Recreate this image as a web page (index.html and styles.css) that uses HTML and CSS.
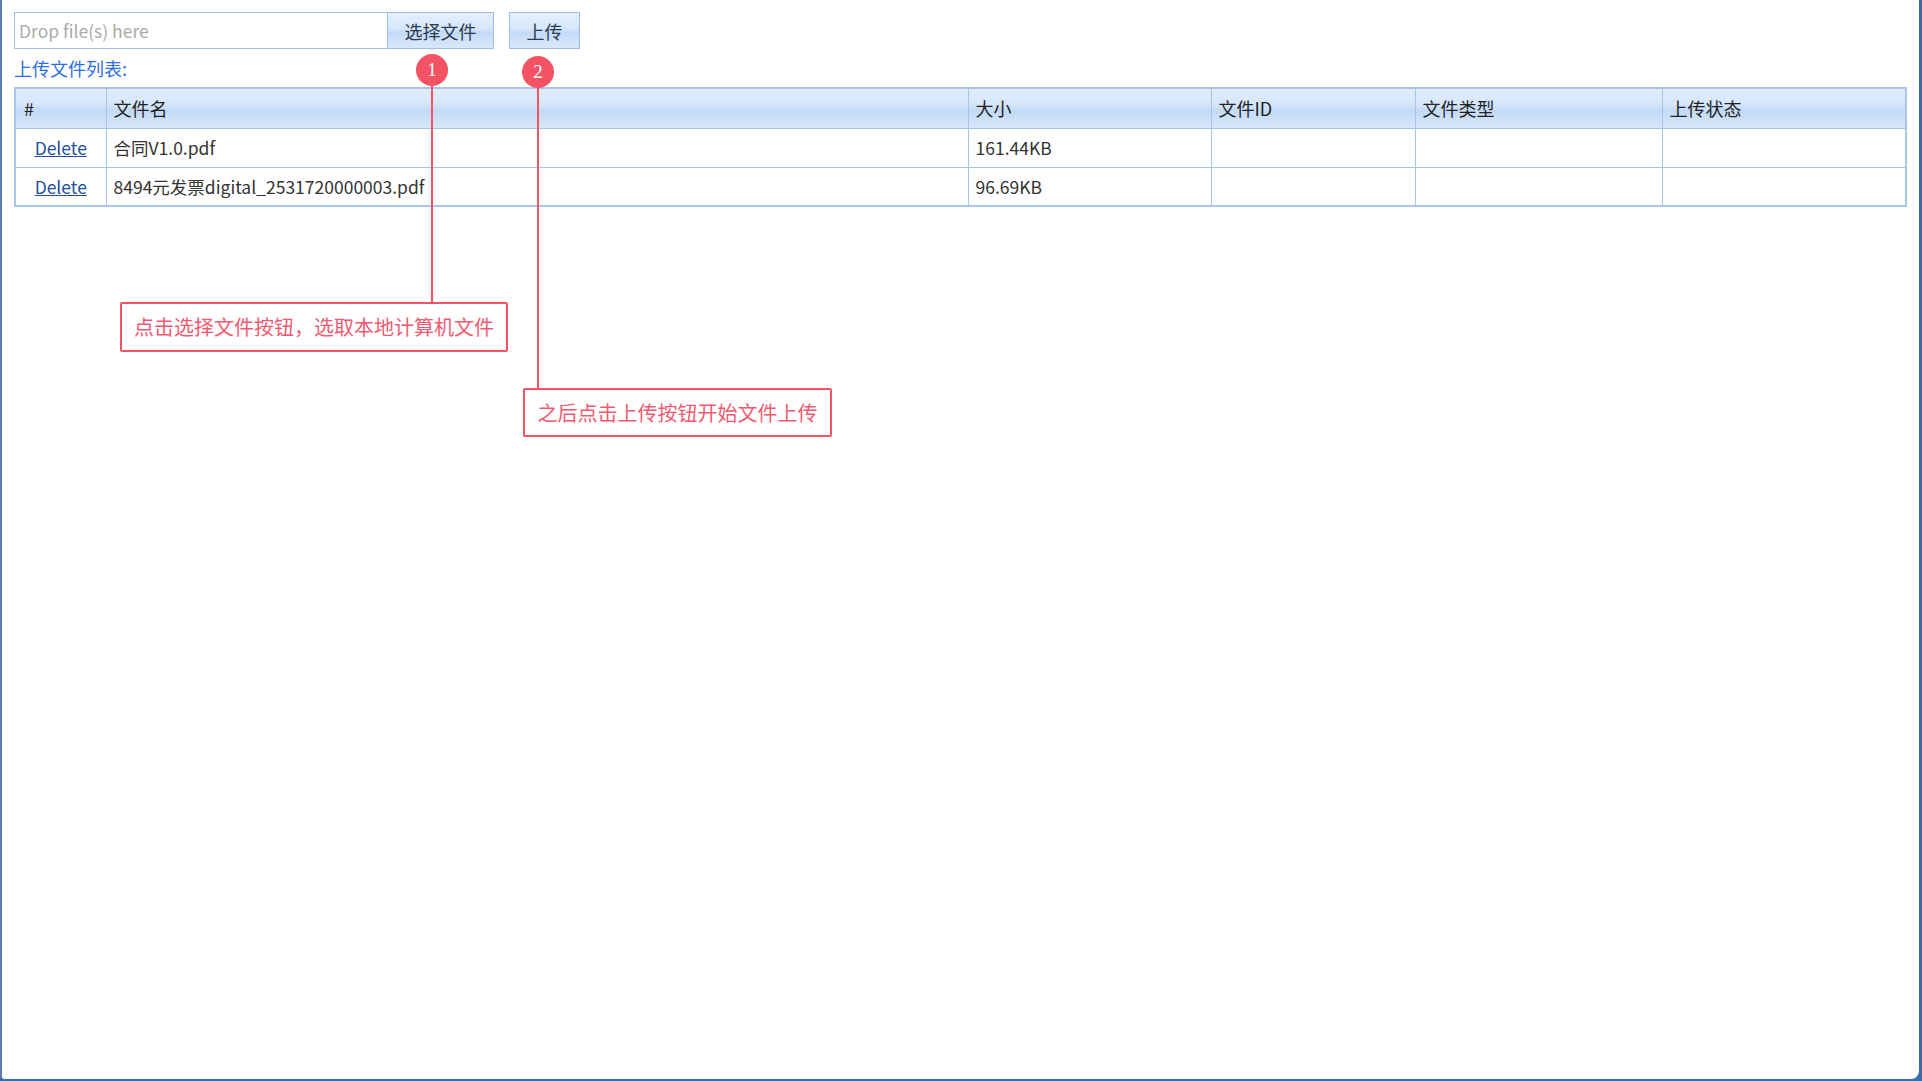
FILE: index.html
```html
<!DOCTYPE html>
<html lang="zh-CN">
<head>
  <meta charset="UTF-8">
  <title>文件上传</title>
  <link rel="stylesheet" href="styles.css">
</head>
<body>

<div class="window">
  <div class="page">
    <div class="toolbar">
      <div class="drop">
        <input type="text" class="drop-input" placeholder="Drop file(s) here" />
        <button class="btn btn-pick">选择文件</button>
      </div>
      <button class="btn btn-upload">上传</button>
    </div>

    <div class="list-title">上传文件列表:</div>

    <table class="file-table">
      <colgroup>
        <col style="width:91px">
        <col style="width:862px">
        <col style="width:243px">
        <col style="width:204px">
        <col style="width:247px">
        <col>
      </colgroup>
      <thead>
        <tr>
          <th>#</th>
          <th>文件名</th>
          <th>大小</th>
          <th>文件ID</th>
          <th>文件类型</th>
          <th>上传状态</th>
        </tr>
      </thead>
      <tbody>
        <tr>
          <td class="op"><a href="#">Delete</a></td>
          <td>合同V1.0.pdf</td>
          <td>161.44KB</td>
          <td></td>
          <td></td>
          <td></td>
        </tr>
        <tr>
          <td class="op"><a href="#">Delete</a></td>
          <td>8494元发票digital_2531720000003.pdf</td>
          <td>96.69KB</td>
          <td></td>
          <td></td>
          <td></td>
        </tr>
      </tbody>
    </table>
  </div>

  <!-- annotation overlay -->
  <div class="mark mark-1">1</div>
  <div class="lead lead-1"></div>
  <div class="note note-1">点击选择文件按钮，选取本地计算机文件</div>

  <div class="mark mark-2">2</div>
  <div class="lead lead-2"></div>
  <div class="note note-2">之后点击上传按钮开始文件上传</div>
</div>

</body>
</html>
```

FILE: styles.css
```css
/* ============================
   Base
============================ */
* {
  box-sizing: border-box;
}

html, body {
  margin: 0;
  padding: 0;
  height: 100%;
  background: #3d6aa8;
}

body {
  font-family: "Noto Sans CJK SC", "Noto Sans", sans-serif;
  font-size: 17.5px;
  color: #333;
}

.window {
  position: relative;
  height: 1079px;
  margin-right: 3px;
  background: #fff;
  border-left: 2px solid #5b7eb0;
  border-bottom-right-radius: 8px;
  border-bottom-left-radius: 4px;
}

.page {
  padding: 12px 12px 0 12px;
}

/* ============================
   Toolbar
============================ */
.toolbar {
  display: flex;
  gap: 15px;
  height: 37px;
}

.drop {
  display: flex;
}

.drop-input {
  width: 373px;
  height: 37px;
  border: 1px solid #a4c0e6;
  border-right: none;
  padding: 0 4px;
  font-family: "Noto Sans CJK SC", sans-serif;
  font-size: 17.5px;
  color: #333;
  outline: none;
}

.drop-input::placeholder {
  color: #aaa;
}

.btn {
  height: 37px;
  border: 1px solid #9dbde6;
  background: linear-gradient(#e3efff 0%, #d6e7fd 45%, #c3dbf8 55%, #d8e8fc 100%);
  font-family: "Noto Sans CJK SC", sans-serif;
  font-size: 18px;
  color: #2b3a50;
  padding: 0;
  cursor: pointer;
}

.btn-pick {
  width: 107px;
}

.btn-upload {
  width: 71px;
}

.list-title {
  color: #2d6ee6;
  font-size: 18px;
  line-height: 20px;
  margin: 9px 0 9px 0;
}

/* ============================
   File table
============================ */
.file-table {
  width: 1893px;
  border-collapse: collapse;
  table-layout: fixed;
  border: 2px solid #a8c4ea;
}

.file-table th,
.file-table td {
  border: 1px solid #a8c4ea;
  text-align: left;
  padding: 0 7px;
  font-weight: normal;
  white-space: nowrap;
}

.file-table th {
  height: 40px;
  font-size: 18px;
  color: #222;
  background: linear-gradient(#e1edfd 0%, #d5e6fb 40%, #c2daf6 55%, #d6e6fa 100%);
}

.file-table th:first-child {
  padding-left: 8px;
}

.file-table td {
  height: 39px;
  color: #333;
}

.file-table td.op {
  text-align: center;
}

.file-table a {
  color: #1e4f9a;
}

/* ============================
   Annotations
============================ */
.mark {
  position: absolute;
  width: 32px;
  height: 32px;
  border-radius: 50%;
  background: #f45366;
  color: #fff;
  font-family: "Liberation Serif", serif;
  font-size: 19px;
  line-height: 32px;
  text-align: center;
}

.mark-1 { left: 414px; top: 54px; }
.mark-2 { left: 520px; top: 56px; }

.lead {
  position: absolute;
  width: 2px;
  background: #f45366;
}

.lead-1 { left: 429px; top: 86px; height: 217px; }
.lead-2 { left: 535px; top: 88px; height: 301px; }

.note {
  position: absolute;
  border: 2px solid #f45366;
  border-radius: 2px;
  background: #fff;
  color: #f25a70;
  font-size: 20px;
  text-align: center;
}

.note-1 {
  left: 118px;
  top: 302px;
  width: 388px;
  height: 50px;
  line-height: 46px;
}

.note-2 {
  left: 521px;
  top: 388px;
  width: 309px;
  height: 49px;
  line-height: 45px;
}
```
